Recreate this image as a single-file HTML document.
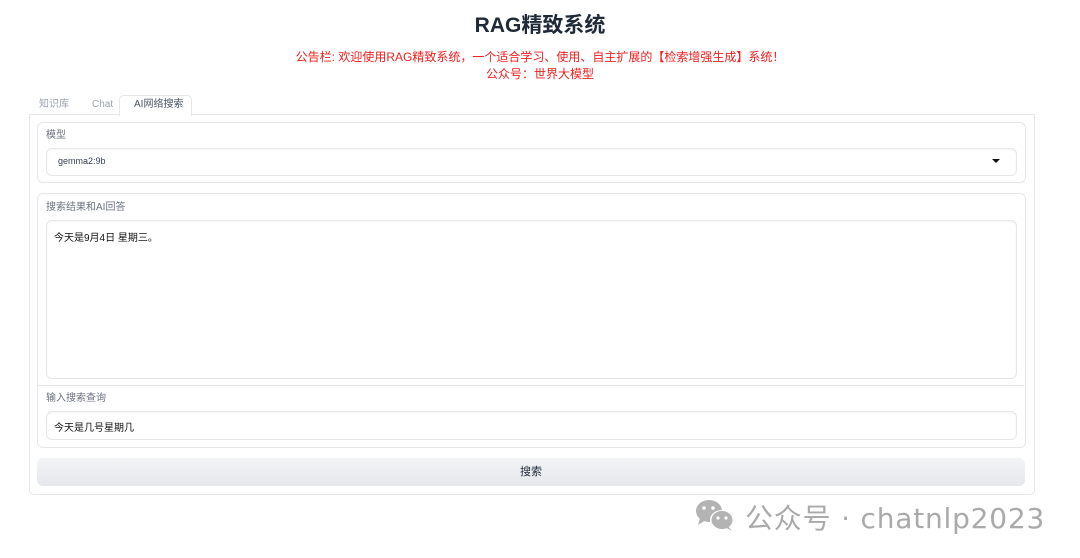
<!DOCTYPE html>
<html><head><meta charset="utf-8"><style>
body{margin:0;width:1080px;height:558px;background:#fff;font-family:"Liberation Sans","Noto Sans CJK SC",sans-serif;position:relative;overflow:hidden}
.a{position:absolute}
.lbl{font-size:10px;color:#6b7280;line-height:12px}
.blk{border:1px solid #e5e7eb;border-radius:6px;background:#fff}
.inp{border:1px solid #e5e7eb;border-radius:6px;background:#fff;box-shadow:inset 0 1px 2px rgba(0,0,0,.04)}
</style></head><body>
<div class="a" style="left:0;width:1080px;top:9px;text-align:center;font-size:21px;font-weight:bold;color:#1f2937">RAG精致系统</div>
<div class="a" style="left:0;width:1080px;top:49px;text-align:center;font-size:12px;color:#ef2020;line-height:17px">公告栏: 欢迎使用RAG精致系统，一个适合学习、使用、自主扩展的【检索增强生成】系统！<br>公众号：世界大模型</div>
<div class="a lbl" style="left:39px;top:99px;color:#9ca3af">知识库</div>
<div class="a lbl" style="left:92px;top:99px;color:#9ca3af">Chat</div>
<div class="a" style="left:119px;top:95px;width:71px;height:20px;border:1px solid #e5e7eb;border-bottom:none;border-radius:5px 5px 0 0;background:#fff;z-index:2"></div>
<div class="a lbl" style="left:134px;top:99px;color:#4b5563;z-index:3">AI网络搜索</div>
<div class="a" style="left:29px;top:114px;width:1004px;height:379px;border:1px solid #e5e7eb;border-radius:0 0 5px 5px"></div>
<div class="a blk" style="left:37px;top:122px;width:987px;height:59px"></div>
<div class="a lbl" style="left:46px;top:130px">模型</div>
<div class="a inp" style="left:46px;top:148px;width:969px;height:26px"></div>
<div class="a" style="left:58px;top:156px;font-size:9px;color:#374151">gemma2:9b</div>
<div class="a" style="left:992px;top:159px;width:0;height:0;border-left:4px solid transparent;border-right:4px solid transparent;border-top:4px solid #111"></div>
<div class="a blk" style="left:37px;top:193px;width:987px;height:253px"></div>
<div class="a lbl" style="left:46px;top:202px">搜索结果和AI回答</div>
<div class="a inp" style="left:46px;top:220px;width:969px;height:157px"></div>
<div class="a" style="left:54px;top:229px;font-size:10px;color:#111">今天是9月4日 星期三。</div>
<div class="a" style="left:38px;top:385px;width:986px;height:1px;background:#e5e7eb"></div>
<div class="a lbl" style="left:46px;top:393px">输入搜索查询</div>
<div class="a inp" style="left:46px;top:411px;width:969px;height:27px"></div>
<div class="a" style="left:54px;top:419px;font-size:10px;color:#111">今天是几号星期几</div>
<div class="a" style="left:37px;top:458px;width:988px;height:28px;border-radius:6px;background:linear-gradient(#f3f4f6,#e5e7eb);text-align:center;line-height:28px;font-size:11px;color:#1f2937">搜索</div>
<svg class="a" style="left:694px;top:498px" width="44" height="34" viewBox="0 0 44 34">
<ellipse cx="15" cy="13" rx="13" ry="11" fill="#b3b3b3"/><path d="M6 20 L4 27 L12 22Z" fill="#b3b3b3"/>
<ellipse cx="28" cy="22" rx="12" ry="10" fill="#fff"/><ellipse cx="28" cy="22" rx="10.5" ry="9" fill="#b3b3b3"/><path d="M34 28 L38 33 L31 29Z" fill="#b3b3b3"/>
<circle cx="10" cy="10" r="1.8" fill="#fff"/><circle cx="19" cy="10" r="1.8" fill="#fff"/>
<circle cx="24" cy="20" r="1.6" fill="#fff"/><circle cx="32" cy="20" r="1.6" fill="#fff"/></svg>
<div class="a" style="left:745px;top:497px;font-size:28px;letter-spacing:0.8px;color:#aaa;white-space:nowrap;font-family:'DejaVu Sans','Noto Sans CJK SC',sans-serif">公众号 · chatnlp2023</div>
</body></html>
